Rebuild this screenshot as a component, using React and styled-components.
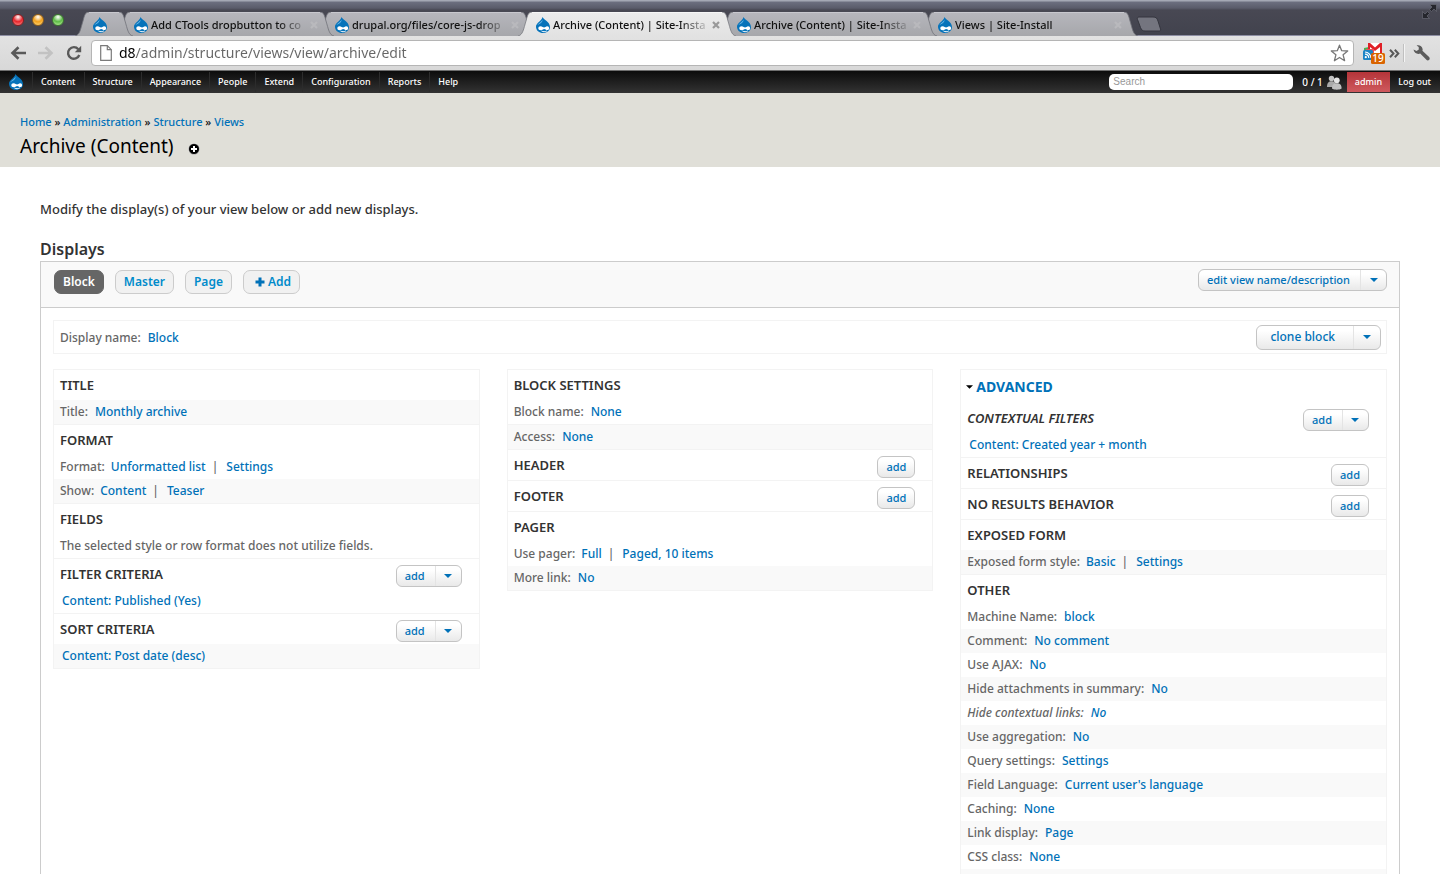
import React, { useState } from "react";
import styled, { createGlobalStyle, css } from "styled-components";

const GlobalStyle = createGlobalStyle`
  * {
    box-sizing: border-box;
  }

  body {
    margin: 0;
    background: #fff;
    color: #333;
    font-family: "Noto Sans", "Open Sans", sans-serif;
    font-size: 12px;
    font-weight: 500;
  }

  button, input {
    font: inherit;
    margin: 0;
  }

  a {
    color: #0071b8;
    text-decoration: none;
  }
`;

// browser window

const BrowserWindow = styled.div`
  display: flex;
  flex-direction: column;
  height: 100vh;
  overflow: hidden;
`;

const TabStrip = styled.div`
  display: flex;
  align-items: flex-end;
  height: 36px;
  flex: none;
  padding-left: 12px;
  background: linear-gradient(#a4a8b4 0, #a4a8b4 1px, #6c6f7f 2px, #5a5c6a 8px, #484853 10px, #42434e 34px);
  border-bottom: 1px solid #8d8ea3;
`;

const WindowButtons = styled.div`
  display: flex;
  gap: 8px;
  width: 63px;
  align-self: flex-start;
  padding-top: 14px;
`;

const Light = styled.button`
  width: 12px;
  height: 12px;
  padding: 0;
  border: 1px solid ${({ $edge }) => $edge};
  border-radius: 50%;
  background: radial-gradient(circle at 50% 20%, #fff 0, ${({ $color }) => $color} 50%, ${({ $glow }) => $glow} 100%);
`;

const TabBox = styled.div`
  position: relative;
  z-index: ${({ $level }) => $level};
  display: flex;
  height: 24px;
  min-width: 0;
  flex: 0 1 ${({ $pinned }) => ($pinned ? "58px" : "218px")};
  margin-right: -17px;
  margin-bottom: -1px;
`;

const TabEdge = styled.svg`
  display: block;
  flex: none;
  width: 14px;
  height: 24px;
`;

const TabBody = styled.div`
  display: flex;
  align-items: center;
  flex: 1;
  min-width: 0;
  padding-left: 3px;
  border-top: 1px solid ${({ $active }) => ($active ? "#f6f6f6" : "#c8c8ce")};
  background: ${({ $active }) => ($active ? "linear-gradient(#ebebeb, #e2e2e2)" : "linear-gradient(#b6b6bc, #a6a7ab)")};
`;

const TabLink = styled.a`
  display: flex;
  align-items: center;
  flex: 1;
  min-width: 0;
  gap: 2px;
  color: #111;
  font-size: 11px;
  line-height: 16px;
`;

const TabTitle = styled.span`
  flex: 1;
  overflow: hidden;
  white-space: nowrap;
  mask-image: linear-gradient(90deg, #000 calc(100% - 32px), transparent);
`;

const TabClose = styled.button`
  width: 10px;
  height: 10px;
  margin-right: 1px;
  padding: 0;
  border: 0;
  background: none;
  color: ${({ $active }) => ($active ? "#999" : "#b9b9bd")};

  svg {
    display: block;
  }
`;

const NewTab = styled.button`
  width: 26px;
  height: 16px;
  margin: 0 0 3px 15px;
  padding: 0;
  border: 0;
  background: none;

  svg {
    display: block;
  }
`;

const FullScreen = styled.button`
  align-self: flex-start;
  margin: 4px 3px 0 auto;
  padding: 0;
  border: 0;
  background: none;

  svg {
    display: block;
  }
`;

const BrowserBar = styled.div`
  display: flex;
  align-items: center;
  flex: none;
  height: 35px;
  padding: 0 8px 0 9px;
  background: linear-gradient(#e2e2e2, #d8d8d8);
  border-bottom: 1px solid #6f6f6f;
`;

const BarButton = styled.button`
  display: flex;
  align-items: center;
  justify-content: center;
  flex: none;
  width: ${({ $width }) => $width || 28}px;
  height: 24px;
  padding: 0;
  border: 0;
  background: none;
  color: ${({ disabled }) => (disabled ? "#c2c2c2" : "#595959")};
`;

const NavButtons = styled.div`
  display: flex;
  flex: none;
  width: 82px;
  gap: 10px;
`;

const AddressBar = styled.div`
  display: flex;
  align-items: center;
  flex: 1;
  height: 26px;
  padding: 0 4px 0 8px;
  gap: 7px;
  background: #fff;
  border: 1px solid #b5b5b5;
  border-radius: 4px;
`;

// host name is black, the rest of the address is grey
const Address = styled.input`
  flex: 1;
  min-width: 0;
  padding: 0;
  border: 0;
  outline: 0;
  color: #666;
  font-size: 14px;
  font-weight: 400;
  line-height: 20px;
  background: linear-gradient(90deg, #000 17px, #666 17px);
  background-clip: text;
  -webkit-text-fill-color: transparent;
`;

const Extensions = styled.div`
  display: flex;
  align-items: center;
  flex: none;
  margin-left: 7px;
`;

const BarDivider = styled.span`
  width: 2px;
  height: 18px;
  margin: 0 5px 0 2px;
  border-left: 1px solid #c0c0c0;
  border-right: 1px solid #f4f4f4;
`;

// admin toolbar

const AdminBar = styled.nav`
  display: flex;
  align-items: center;
  flex: none;
  height: 22px;
  padding-right: 1px;
  background: linear-gradient(#0c0c0c, #333);
  font-size: 9px;
  line-height: 20px;
`;

const AdminHome = styled.a`
  display: flex;
  justify-content: center;
  width: 32px;
`;

const AdminLink = styled.a`
  height: 20px;
  padding: 0 8px;
  border-left: 1px solid #2c2c2c;
  color: #fff;
`;

const AdminSearch = styled.input`
  width: 184px;
  height: 16px;
  margin-left: auto;
  padding: 0 4px;
  border: 0;
  border-radius: 5px;
  background: #fff;
  font-family: "Liberation Sans", Arial, sans-serif;
  font-size: 10px;
  font-weight: 400;

  &::placeholder {
    color: #999;
  }
`;

const UserCount = styled.span`
  display: flex;
  align-items: center;
  gap: 4px;
  padding: 0 5px 0 9px;
  color: #fff;
  font-size: 10px;
`;

const AccountLink = styled.a`
  height: 20px;
  padding: 0 8px;
  color: #fff;
  background: ${({ $current }) => ($current ? "linear-gradient(#b53439, #cf5a5e)" : "none")};
`;

// page

const Viewport = styled.div`
  flex: 1;
  min-height: 0;
  overflow: hidden;
`;

const PageHeader = styled.header`
  padding: 21px 20px 9px;
  background: #e0dfd8;
`;

const Breadcrumb = styled.nav`
  color: #111;
  font-size: 11px;
  line-height: 16px;
`;

const TitleRow = styled.div`
  display: flex;
  align-items: center;
  gap: 14px;
  margin-top: 4px;
`;

const PageTitle = styled.h1`
  margin: 0;
  color: #000;
  font-size: 19px;
  font-weight: 400;
  line-height: 24px;
`;

const ShortcutButton = styled.button`
  padding: 5px 0 0;
  border: 0;
  background: none;

  svg {
    display: block;
  }
`;

const Content = styled.main`
  padding: 32px 40px;
`;

const Intro = styled.p`
  margin: 0 0 20px;
  font-size: 13px;
  line-height: 20px;
`;

const DisplaysTitle = styled.h2`
  margin: 0 0 2px;
  font-size: 16px;
  font-weight: 600;
  line-height: 20px;
`;

const Panel = styled.section`
  border: 1px solid #ccc;
`;

const PanelTop = styled.div`
  display: flex;
  align-items: flex-start;
  justify-content: space-between;
  height: 46px;
  padding: 7px 12px 0 13px;
  background: #f9f9f9;
  border-bottom: 1px solid #ccc;
`;

const DisplayTabs = styled.div`
  display: flex;
  gap: 11px;
  padding-top: 1px;
`;

const DisplayTab = styled.button`
  display: flex;
  align-items: center;
  gap: 3px;
  height: 24px;
  padding: ${({ $add }) => ($add ? "0 8px 0 11px" : "0 8px")};
  border: 1px solid ${({ $active }) => ($active ? "#666" : "#ccc")};
  border-radius: 7px;
  background: ${({ $active }) => ($active ? "#666" : "#f1f1f1")};
  color: ${({ $active }) => ($active ? "#fff" : "#008bcb")};
  font-size: 12px;
  font-weight: 600;
  line-height: 20px;
`;

const PanelBody = styled.div`
  padding: 12px;
`;

const DisplayDetails = styled.div`
  display: flex;
  align-items: center;
  justify-content: space-between;
  height: 34px;
  margin-bottom: 15px;
  padding: 0 5px 0 6px;
  border: 1px solid #f3f3f3;
  color: #666;
`;

const Columns = styled.div`
  display: grid;
  grid-template-columns: repeat(3, minmax(0, 1fr));
  align-items: start;
  gap: 27px;
`;

const Column = styled.div`
  border: 1px solid #f3f3f3;
  border-bottom: 0;
`;

const Bucket = styled.section`
  border-bottom: 1px solid #f3f3f3;
`;

const BucketHead = styled.div`
  display: flex;
  justify-content: space-between;
  height: 30px;
  padding: 6px 17px 0 6px;
`;

const BucketTitle = styled.h3`
  margin: 0;
  color: #333;
  font-size: 13px;
  font-weight: 600;
  font-style: ${({ $overridden }) => ($overridden ? "italic" : "normal")};
  line-height: 18px;
`;

const Row = styled.div`
  display: flex;
  align-items: center;
  height: 24px;
  padding: 0 6px;
  color: #666;
  line-height: 20px;
  background: ${({ $striped }) => ($striped ? "#f9f9f9" : "#fff")};
  font-style: ${({ $overridden }) => ($overridden ? "italic" : "normal")};
`;

const Divider = styled.div`
  border-top: 1px solid #f3f3f3;
`;

const Label = styled.span`
  margin-right: ${({ $tight }) => ($tight ? 6 : 7)}px;
`;

const Bar = styled.span`
  margin: 0 8px 0 6px;
`;

const FieldLink = styled.a`
  padding-left: 2px;
`;

const AdvancedToggle = styled.button`
  display: flex;
  align-items: center;
  gap: 3px;
  height: 33px;
  padding: 0 5px;
  border: 0;
  background: none;
  color: #0071b8;
  font-size: 14px;
  font-weight: 700;
  line-height: 20px;
`;

const buttonFace = css`
  border: 1px solid #c4c4c4;
  border-radius: 6px;
  background: linear-gradient(#fff 20%, #e9e9e9);
`;

const buttonText = css`
  color: #0071b8;
  font-size: ${({ $large }) => ($large ? 12 : 11)}px;
  font-weight: 500;
  line-height: 16px;
`;

const SmallButton = styled.button`
  ${buttonFace}
  ${buttonText}
  height: 22px;
  padding: 0 8px;
`;

const DropButton = styled.div`
  ${buttonFace}
  display: flex;
  height: ${({ $large }) => ($large ? 25 : 22)}px;
`;

const DropAction = styled.button`
  ${buttonText}
  padding: ${({ $large }) => ($large ? "0 18px 0 13px" : "0 10px 0 8px")};
  border: 0;
  background: none;
`;

const DropToggle = styled.button`
  display: flex;
  align-items: center;
  justify-content: center;
  width: ${({ $large }) => ($large ? 27 : 26)}px;
  padding: 0;
  border: 0;
  border-left: 1px solid #e4e4e4;
  background: none;
`;

// icons

const DropIcon = styled.svg`
  flex: none;
  width: 16px;
  height: 16px;
`;

const Druplicon = () => (
  <DropIcon viewBox="0 0 16 16">
    <path d="M7.6 0C8.4 2.8 15 4.6 15 10c0 3.6-3.1 6-6.9 6C4.2 16 1 13.5 1 9.7 1 5.8 6.4 4.5 7.6 0z" fill="#0673ba" />
    <path d="M7.5 2.5C7 5 3.6 5.800 2.400 8.300c1.600-1.600 5.400-2 5.100-5.800z" fill="#6fbcec" />
    <path d="M5.6 9.300c1.700 0 2.500 1.300 3.500 1.300.9 0 1.700-1.300 3.100-1.300 1.200 0 1.900.8 1.900 1.900 0 1.200-.8 1.900-1.900 1.900-1.300 0-1.900-1.100-3-1.100s-2 1.300-3.600 1.300c-1.400 0-2.300-.8-2.300-2 0-1.100.9-2 2.300-2z" fill="#fff" />
    <path d="M6.800 14.200c1.300.8 3.300.8 4.700-.1" stroke="#fff" strokeWidth="1" strokeLinecap="round" fill="none" />
  </DropIcon>
);

const TriangleDown = ({ color = "#0071b8", width = 8 }) => (
  <svg width={width} height="4" viewBox="0 0 8 4">
    <path d="M0 0h8L4 4z" fill={color} />
  </svg>
);

const CloseIcon = () => (
  <svg width="10" height="10" viewBox="0 0 10 10">
    <path d="M2 2l6 6M8 2l-6 6" stroke="currentColor" strokeWidth="2.2" />
  </svg>
);

const ArrowIcon = ({ forward }) => (
  <svg width="16" height="14" viewBox="0 0 16 14">
    <path
      d={forward ? "M0 7h13M7.5 1.2L13.5 7l-6 5.8" : "M16 7H3M8.5 1.2L2.5 7l6 5.8"}
      fill="none"
      stroke="currentColor"
      strokeWidth="2.6"
    />
  </svg>
);

const ReloadIcon = () => (
  <svg width="16" height="16" viewBox="0 0 16 16">
    <path d="M12.3 4.2A5.8 5.8 0 1 0 13.3 10" fill="none" stroke="currentColor" strokeWidth="2.4" />
    <path d="M15.2 0.8v6.4H8.8z" fill="currentColor" />
  </svg>
);

const PageIcon = () => (
  <svg width="12" height="16" viewBox="0 0 12 16">
    <path d="M0.7 0.7h6.6l4 4v10.6H0.7z" fill="#fff" stroke="#7a7a7a" strokeWidth="1.2" />
    <path d="M7.3 0.7v4h4" fill="none" stroke="#7a7a7a" strokeWidth="1.2" />
  </svg>
);

const StarIcon = () => (
  <svg width="19" height="18" viewBox="0 0 19 18">
    <path
      d="M9.5 1.2l2.2 5.5 6 0.3-4.6 3.8 1.5 5.9-5.1-3.2-5.1 3.2 1.5-5.9L1.3 7l6-0.3z"
      fill="#fff"
      stroke="#777"
      strokeWidth="1.3"
      strokeLinejoin="round"
    />
  </svg>
);

const MailIcon = () => (
  <svg width="24" height="22" viewBox="0 0 24 22">
    <path d="M2 6l5-1v7H2z" fill="#4caf50" />
    <rect x="7" y="1" width="12" height="11" fill="#fff" />
    <path d="M6 1v11h2V5l5 4 5-4v7h2V1h-2l-5 4.5L8 1z" fill="#e01f26" />
    <rect x="4" y="7" width="8" height="5" fill="#e8505a" />
    <rect x="1" y="8" width="10" height="10" rx="1.5" fill="#1d84c6" />
    <circle cx="3.8" cy="15.2" r="1.1" fill="#fff" />
    <path d="M3 12.2a4 4 0 0 1 3.8 3.8M3 10a6.2 6.2 0 0 1 6 6" stroke="#fff" strokeWidth="1.2" fill="none" />
    <rect x="9" y="11" width="14" height="11" rx="1.5" fill="#d96400" />
    <text x="16" y="20" fill="#fff" fontSize="10" fontWeight="500" textAnchor="middle">19</text>
  </svg>
);

const MoreIcon = () => (
  <svg width="11" height="9" viewBox="0 0 11 9">
    <path d="M1 0.8l3.5 3.7L1 8.2M5.8 0.8l3.5 3.7-3.5 3.7" fill="none" stroke="currentColor" strokeWidth="2" />
  </svg>
);

const WrenchIcon = () => (
  <svg width="17" height="16" viewBox="0 0 17 16">
    <path
      d="M3.6 0.5c2.6-0.9 5.6 0.6 6 3.4 0.1 0.7 0 1.3-0.2 1.9l6.7 6.3c0.8 0.8 0.8 1.9 0.1 2.7-0.8 0.8-2 0.8-2.8 0L7.2 8.6C4.3 9.6 0.9 8 0.5 4.6l3.1 1.5 2.2-1.5-0.1-2.6z"
      fill="#5c5c5c"
    />
  </svg>
);

const PeopleIcon = () => (
  <svg width="15" height="15" viewBox="0 0 15 15">
    <circle cx="4.5" cy="3.5" r="2.7" fill="#c4c4c4" />
    <path d="M0 12c0-4 1.5-5.8 4.5-5.8S9 8 9 12z" fill="#aaa" />
    <circle cx="9.8" cy="5.3" r="2.9" fill="#e6e6e6" />
    <path d="M5 13.5c0-3.7 1.6-5.3 4.8-5.3s4.8 1.6 4.8 5.3c-2 1.6-7.6 1.6-9.6 0z" fill="#c0c0c0" />
  </svg>
);

const browserTabs = [
  { id: 1, title: "", pinned: true },
  { id: 2, title: "Add CTools dropbutton to co" },
  { id: 3, title: "drupal.org/files/core-js-drop" },
  { id: 4, title: "Archive (Content) | Site-Insta", active: true },
  { id: 5, title: "Archive (Content) | Site-Insta" },
  { id: 6, title: "Views | Site-Install" },
];

const adminLinks = ["Content", "Structure", "Appearance", "People", "Extend", "Configuration", "Reports", "Help"];

const firstColumn = [
  { title: "Title", rows: [{ label: "Title:", links: ["Monthly archive"], striped: true }] },
  {
    title: "Format",
    rows: [
      { label: "Format:", links: ["Unformatted list", "Settings"] },
      { label: "Show:", links: ["Content", "Teaser"], striped: true },
    ],
  },
  { title: "Fields", rows: [{ text: "The selected style or row format does not utilize fields." }] },
  { title: "Filter criteria", action: "drop", rows: [{ field: "Content: Published (Yes)" }] },
  { title: "Sort criteria", action: "drop", rows: [{ field: "Content: Post date (desc)", striped: true }] },
];

const secondColumn = [
  {
    title: "Block settings",
    rows: [
      { label: "Block name:", links: ["None"] },
      { divider: true },
      { label: "Access:", links: ["None"], striped: true },
    ],
  },
  { title: "Header", action: "add", rows: [] },
  { title: "Footer", action: "add", rows: [] },
  {
    title: "Pager",
    rows: [
      { label: "Use pager:", links: ["Full", "Paged, 10 items"] },
      { label: "More link:", links: ["No"], striped: true },
    ],
  },
];

const advancedColumn = [
  {
    title: "Contextual filters",
    action: "drop",
    overridden: true,
    rows: [{ field: "Content: Created year + month" }],
  },
  { title: "Relationships", action: "add", rows: [] },
  { title: "No results behavior", action: "add", rows: [] },
  { title: "Exposed form", rows: [{ label: "Exposed form style:", links: ["Basic", "Settings"], striped: true }] },
  {
    title: "Other",
    rows: [
      { label: "Machine Name:", links: ["block"] },
      { label: "Comment:", links: ["No comment"], striped: true },
      { label: "Use AJAX:", links: ["No"] },
      { label: "Hide attachments in summary:", links: ["No"], striped: true },
      { label: "Hide contextual links:", links: ["No"], overridden: true },
      { label: "Use aggregation:", links: ["No"], striped: true },
      { label: "Query settings:", links: ["Settings"] },
      { label: "Field Language:", links: ["Current user's language"], striped: true },
      { label: "Caching:", links: ["None"] },
      { label: "Link display:", links: ["Page"], striped: true },
      { label: "CSS class:", links: ["None"] },
      { striped: true },
    ],
  },
];

const BrowserTab = ({ tab, level }) => {
  const id = `tab-edge-${tab.id}`;
  const from = tab.active ? "#ebebeb" : "#b6b6bc";
  const to = tab.active ? "#e2e2e2" : "#a6a7ab";
  const line = tab.active ? "#77787f" : "#707178";

  return (
    <TabBox $level={level} $pinned={tab.pinned}>
      <TabEdge viewBox="0 0 14 24">
        <linearGradient id={id} x1="0" y1="0" x2="0" y2="1">
          <stop offset="0" stopColor={from} />
          <stop offset="1" stopColor={to} />
        </linearGradient>
        <path d="M0 24C5 23 5.5 17 8 9 9.5 3 10.5 0 14 0V24z" fill={`url(#${id})`} />
        <path d="M0 24C5 23 5.5 17 8 9 9.5 3 10.5 0 14 0" fill="none" stroke={line} strokeWidth="0.8" />
      </TabEdge>
      <TabBody $active={tab.active}>
        <TabLink href="#" aria-label={tab.title || "Drupal"}>
          <Druplicon />
          {!tab.pinned && <TabTitle>{tab.title}</TabTitle>}
        </TabLink>
        {!tab.pinned && (
          <TabClose $active={tab.active} aria-label="Close tab">
            <CloseIcon />
          </TabClose>
        )}
      </TabBody>
      <TabEdge viewBox="0 0 14 24">
        <path d="M14 24C9 23 8.5 17 6 9 4.5 3 3.5 0 0 0V24z" fill={`url(#${id})`} />
        <path d="M14 24C9 23 8.5 17 6 9 4.5 3 3.5 0 0 0" fill="none" stroke={line} strokeWidth="0.8" />
      </TabEdge>
    </TabBox>
  );
};

const Dropdown = ({ children, large }) => (
  <DropButton $large={large}>
    <DropAction $large={large}>{children}</DropAction>
    <DropToggle $large={large} aria-label="More actions">
      <TriangleDown />
    </DropToggle>
  </DropButton>
);

const SettingRow = ({ row }) => {
  if (row.divider) {
    return <Divider />;
  }
  const links = row.links || [];
  return (
    <Row $striped={row.striped} $overridden={row.overridden}>
      {row.text}
      {row.field && <FieldLink href="#">{row.field}</FieldLink>}
      {row.label && <Label $tight={links.length > 1}>{row.label}</Label>}
      {links.map((link, index) => (
        <React.Fragment key={link}>
          {index > 0 && <Bar>|</Bar>}
          <a href="#">{link}</a>
        </React.Fragment>
      ))}
    </Row>
  );
};

const Buckets = ({ items }) =>
  items.map((item) => (
    <Bucket key={item.title}>
      <BucketHead>
        <BucketTitle $overridden={item.overridden}>{item.title.toUpperCase()}</BucketTitle>
        {item.action === "drop" && <Dropdown>add</Dropdown>}
        {item.action === "add" && <SmallButton>add</SmallButton>}
      </BucketHead>
      {item.rows.map((row, index) => (
        <SettingRow row={row} key={index} />
      ))}
    </Bucket>
  ));

const App = () => {
  const [display, setDisplay] = useState("Block");
  const [showAdvanced, setShowAdvanced] = useState(true);

  return (
    <BrowserWindow>
      <GlobalStyle />

      <TabStrip>
        <WindowButtons>
          <Light $color="#e8252b" $glow="#ff9c98" $edge="#8c1c20" aria-label="Close" />
          <Light $color="#f3a21c" $glow="#ffe08a" $edge="#96621a" aria-label="Minimize" />
          <Light $color="#5dbb46" $glow="#c6f5a8" $edge="#3c7a30" aria-label="Zoom" />
        </WindowButtons>
        {browserTabs.map((tab, index) => (
          <BrowserTab tab={tab} key={tab.id} level={tab.active ? 10 : 8 - index} />
        ))}
        <NewTab aria-label="New tab">
          <svg width="26" height="16" viewBox="0 0 26 16">
            <path d="M3 1h14c3 0 4 1 5 4l2.5 8c0.5 1.5 0 2-1.5 2H9c-2.5 0-3.5-1-4.5-3.5L1.5 3.5C1 2 1.5 1 3 1z" fill="#74757f" stroke="#34353e" />
          </svg>
        </NewTab>
        <FullScreen aria-label="Full screen">
          <svg width="15" height="15" viewBox="0 0 15 15">
            <path d="M7.5 0.5H14.5V7.5L12 5 9.5 7.5 7.5 5.5 10 3z" fill="#25262d" stroke="#6f717c" strokeWidth="0.6" />
            <path d="M7.5 14.5H0.5V7.5L3 10l2.5-2.5 2 2L5 12z" fill="#25262d" stroke="#6f717c" strokeWidth="0.6" />
          </svg>
        </FullScreen>
      </TabStrip>

      <BrowserBar>
        <NavButtons>
          <BarButton $width={18} aria-label="Back"><ArrowIcon /></BarButton>
          <BarButton $width={18} disabled aria-label="Forward"><ArrowIcon forward /></BarButton>
          <BarButton $width={18} aria-label="Reload"><ReloadIcon /></BarButton>
        </NavButtons>
        <AddressBar>
          <PageIcon />
          <Address aria-label="Address" defaultValue="d8/admin/structure/views/view/archive/edit" />
          <BarButton $width={19} aria-label="Bookmark"><StarIcon /></BarButton>
        </AddressBar>
        <Extensions>
          <BarButton $width={26} aria-label="Mail"><MailIcon /></BarButton>
          <BarButton $width={14} aria-label="More extensions"><MoreIcon /></BarButton>
          <BarDivider />
          <BarButton $width={22} aria-label="Settings"><WrenchIcon /></BarButton>
        </Extensions>
      </BrowserBar>

      <AdminBar>
        <AdminHome href="#" aria-label="Home">
          <Druplicon />
        </AdminHome>
        {adminLinks.map((link) => (
          <AdminLink href="#" key={link}>{link}</AdminLink>
        ))}
        <AdminSearch type="search" placeholder="Search" aria-label="Search" />
        <UserCount>
          0 / 1 <PeopleIcon />
        </UserCount>
        <AccountLink href="#" $current>admin</AccountLink>
        <AccountLink href="#">Log out</AccountLink>
      </AdminBar>

      <Viewport>
        <PageHeader>
          <Breadcrumb aria-label="Breadcrumb">
            <a href="#">Home</a> » <a href="#">Administration</a> » <a href="#">Structure</a> » <a href="#">Views</a>
          </Breadcrumb>
          <TitleRow>
            <PageTitle>Archive (Content)</PageTitle>
            <ShortcutButton aria-label="Add to shortcuts">
              <svg width="12" height="12" viewBox="0 0 12 12">
                <circle cx="6" cy="6" r="5.5" fill="#000" stroke="#fff" strokeWidth="0.6" />
                <path d="M6 3v6M3 6h6" stroke="#fff" strokeWidth="2" />
              </svg>
            </ShortcutButton>
          </TitleRow>
        </PageHeader>

        <Content>
          <Intro>Modify the display(s) of your view below or add new displays.</Intro>
          <DisplaysTitle>Displays</DisplaysTitle>
          <Panel>
            <PanelTop>
              <DisplayTabs>
                {["Block", "Master", "Page"].map((name) => (
                  <DisplayTab key={name} $active={name === display} onClick={() => setDisplay(name)}>
                    {name}
                  </DisplayTab>
                ))}
                <DisplayTab $add>
                  <svg width="10" height="10" viewBox="0 0 10 10">
                    <path d="M5 0.5v9M0.5 5h9" stroke="#0071b8" strokeWidth="3" />
                  </svg>
                  Add
                </DisplayTab>
              </DisplayTabs>
              <Dropdown>edit view name/description</Dropdown>
            </PanelTop>

            <PanelBody>
              <DisplayDetails>
                <span>
                  <Label>Display name:</Label>
                  <a href="#">{display}</a>
                </span>
                <Dropdown large>clone block</Dropdown>
              </DisplayDetails>

              <Columns>
                <Column>
                  <Buckets items={firstColumn} />
                </Column>
                <Column>
                  <Buckets items={secondColumn} />
                </Column>
                <Column>
                  <AdvancedToggle aria-expanded={showAdvanced} onClick={() => setShowAdvanced(!showAdvanced)}>
                    <TriangleDown color="#000" width={7} />
                    ADVANCED
                  </AdvancedToggle>
                  {showAdvanced && <Buckets items={advancedColumn} />}
                </Column>
              </Columns>
            </PanelBody>
          </Panel>
        </Content>
      </Viewport>
    </BrowserWindow>
  );
};

export default App;
